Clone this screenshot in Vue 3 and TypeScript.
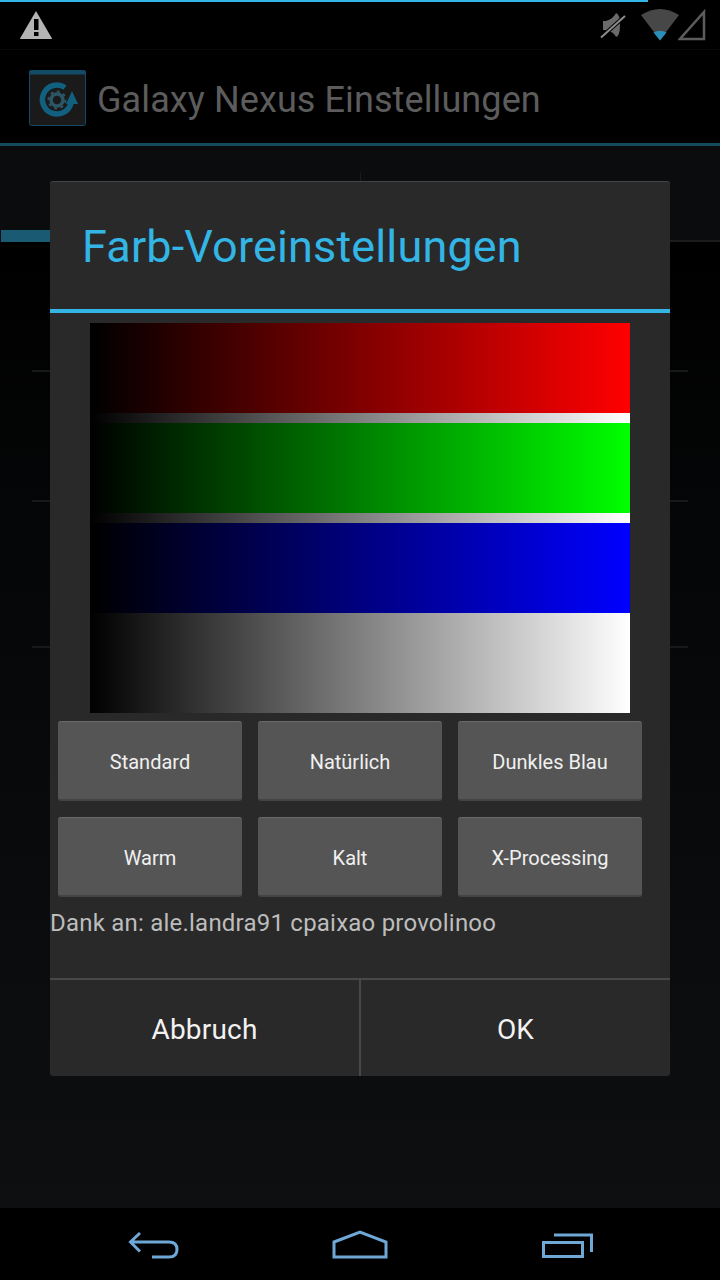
<template>
  <div class="screen">
    <div class="status-bar">
      <div class="progress"></div>
      <svg class="warn" width="34" height="30" viewBox="0 0 34 30">
        <path d="M17 1 L33 28.5 Q33 29 32 29 L2 29 Q1 29 1 28.5 Z" fill="#b4b4b4" />
        <rect x="15" y="9" width="4.5" height="11" fill="#000" />
        <rect x="15" y="22" width="4.5" height="4" fill="#000" />
      </svg>
      <div class="status-icons">
        <svg class="mute" width="26" height="28" viewBox="0 0 26 28">
          <path d="M3 9 L6 9 Q14 6 16 1 Q20 2 20 13 Q20 24 16 25 Q14 20 6 18 L3 18 Z" fill="#6a6a6a" />
          <path d="M1 25.5 L25 4" stroke="#000" stroke-width="4" />
          <path d="M1 25.5 L25 4" stroke="#8c8c8c" stroke-width="2" />
        </svg>
        <svg class="wifi" width="40" height="32" viewBox="0 0 40 32">
          <path d="M1 6 Q20 -6 39 6 L20 31 Z" fill="#474747" />
          <path d="M13.5 23.5 Q20 20 26.5 23.5 L20 31.5 Z" fill="#2a8fb8" />
        </svg>
        <svg class="signal" width="28" height="32" viewBox="0 0 28 32">
          <path d="M26 3 L26 30 L2 30 Z" fill="none" stroke="#5c5c5c" stroke-width="2.5" />
        </svg>
      </div>
    </div>

    <div class="action-bar">
      <svg class="app-icon" width="57" height="56" viewBox="0 0 57 56">
        <rect x="0.5" y="0.5" width="56" height="55" rx="2" fill="#1a1a1a" stroke="#134a66" />
        <rect x="0.5" y="0.5" width="56" height="4" fill="#134a66" />
        <path d="M42 33 A14.5 14.5 0 1 1 36 17.5" fill="none" stroke="#12607f" stroke-width="5.5" />
        <circle cx="28" cy="30" r="6" fill="none" stroke="#2c5666" stroke-width="3.5" />
        <circle cx="28" cy="30" r="8.5" fill="none" stroke="#2c5666" stroke-width="2" stroke-dasharray="3 3.6" />
        <path d="M43 21 L49 34 L37 34 Z" fill="#12607f" />
      </svg>
      <span class="app-title">Galaxy Nexus Einstellungen</span>
    </div>

    <div class="tabs">
      <div class="tab tab-active"></div>
      <div class="tab tab-right"></div>
    </div>

    <div class="list">
      <div class="list-row row-a"></div>
      <div class="list-row row-b"></div>
      <div class="list-row row-c"></div>
    </div>

    <div class="nav-bar">
      <svg width="52" height="30" viewBox="0 0 52 30">
        <path d="M12 3 L2.5 12 L12 21.5 M3 12 L41 12 Q49 12 49 19.5 Q49 27 41 27 L24 27" fill="none" stroke="#6fa8d6" stroke-width="3" />
      </svg>
      <svg width="56" height="30" viewBox="0 0 56 30">
        <path d="M2 12 L28 2 L54 12 L54 27 L2 27 Z" fill="none" stroke="#6fa8d6" stroke-width="3" />
      </svg>
      <svg width="54" height="30" viewBox="0 0 54 30">
        <path d="M3.5 12.5 L42.5 12.5 L42.5 26.5 L3.5 26.5 Z M14 5 L51.5 5 L51.5 22" fill="none" stroke="#6fa8d6" stroke-width="3" />
      </svg>
    </div>

    <div class="dialog">
      <h1 class="dialog-title">Farb-Voreinstellungen</h1>
      <div class="dialog-body">
        <div class="color-box">
          <div class="strip strip-red"></div>
          <div class="strip-thin"></div>
          <div class="strip strip-green"></div>
          <div class="strip-thin"></div>
          <div class="strip strip-blue"></div>
          <div class="strip-gray"></div>
        </div>
        <div class="presets">
          <button v-for="name in presets" :key="name" class="preset">{{ name }}</button>
        </div>
        <p class="credits">Dank an: ale.landra91 cpaixao provolinoo</p>
      </div>
      <div class="dialog-footer">
        <button class="footer-btn">Abbruch</button>
        <button class="footer-btn">OK</button>
      </div>
    </div>
  </div>
</template>

<script setup lang="ts">
const presets: string[] = ['Standard', 'Natürlich', 'Dunkles Blau', 'Warm', 'Kalt', 'X-Processing']
</script>

<style scoped>
.screen {
  position: relative;
  width: 720px;
  height: 1280px;
  display: flex;
  flex-direction: column;
  background: #000;
  overflow: hidden;
  font-family: Roboto, sans-serif;
}

.status-bar {
  position: relative;
  height: 50px;
  flex-shrink: 0;
  display: flex;
  justify-content: space-between;
  align-items: flex-start;
  background: #000;
  border-bottom: 1px solid #0a0a0a;
  box-sizing: border-box;
}

.progress {
  position: absolute;
  left: 0;
  top: 0;
  width: 648px;
  height: 2px;
  background: #33b5e5;
}

.warn {
  margin: 10px 0 0 19px;
}

.status-icons {
  display: flex;
  align-items: flex-start;
  padding: 9px 14px 0 0;
}

.mute {
  margin-top: 3px;
}

.wifi {
  margin-left: 14px;
}

.signal {
  margin-left: -2px;
}

.action-bar {
  height: 96px;
  flex-shrink: 0;
  display: flex;
  align-items: flex-start;
  background: #000;
  border-bottom: 3px solid #144a5e;
  box-sizing: border-box;
}

.app-icon {
  margin: 20px 0 0 29px;
}

.app-title {
  margin: 26px 0 0 11px;
  font-size: 36px;
  line-height: 48px;
  letter-spacing: 0.1px;
  color: #5c5c5c;
}

.tabs {
  height: 96px;
  flex-shrink: 0;
  display: flex;
  background: #0b0c0d;
}

.tab {
  width: 360px;
  box-sizing: border-box;
}

.tab-active {
  position: relative;
}

.tab-active::after {
  content: '';
  position: absolute;
  left: 1px;
  bottom: 0;
  width: 358px;
  height: 12px;
  background: #1a5a72;
}

.tab-right {
  border-left: 1px solid #1a1b1c;
  border-bottom: 2px solid #1c1c1c;
  margin-top: 26px;
  height: 70px;
}

.list {
  flex: 1;
  display: flex;
  flex-direction: column;
  background: linear-gradient(#000 0, #050607 30%, #0e0f11 100%);
  padding: 0 32px;
}

.list-row {
  border-bottom: 2px solid #17181a;
}

.row-a {
  height: 128px;
}

.row-b {
  height: 128px;
}

.row-c {
  height: 144px;
}

.nav-bar {
  height: 72px;
  flex-shrink: 0;
  display: flex;
  justify-content: space-between;
  align-items: flex-start;
  padding: 22px 126px 0 128px;
  box-sizing: border-box;
  background: #000;
}

.dialog {
  position: absolute;
  left: 50px;
  top: 181px;
  width: 620px;
  height: 895px;
  display: flex;
  flex-direction: column;
  background: #292929;
  border-top: 1px solid #444;
  border-radius: 3px;
  box-sizing: border-box;
}

.dialog-title {
  height: 127px;
  margin: 0;
  padding: 0 0 0 32px;
  flex-shrink: 0;
  box-sizing: border-box;
  font-weight: 400;
  font-size: 45px;
  line-height: 130px;
  letter-spacing: 0.15px;
  color: #33b5e5;
}

.dialog-body {
  flex: 1;
  border-top: 4px solid #33b5e5;
  padding-top: 10px;
  display: flex;
  flex-direction: column;
}

.color-box {
  width: 540px;
  margin-left: 40px;
  display: flex;
  flex-direction: column;
}

.strip {
  height: 90px;
}

.strip-red {
  background: linear-gradient(to right, #000, #f00);
}

.strip-green {
  background: linear-gradient(to right, #000, #0f0);
}

.strip-blue {
  background: linear-gradient(to right, #000, #00f);
}

.strip-thin {
  height: 10px;
  background: linear-gradient(to right, #000, #fff);
}

.strip-gray {
  height: 100px;
  background: linear-gradient(to right, #000, #fff);
}

.presets {
  display: grid;
  grid-template-columns: repeat(3, 184px);
  grid-auto-rows: 80px;
  column-gap: 16px;
  row-gap: 16px;
  margin: 8px 0 0 8px;
}

.preset {
  padding: 3px 0 0;
  border: 0;
  border-top: 1px solid #6a6a6a;
  border-bottom: 2px solid #444;
  border-radius: 3px;
  background: #555;
  color: #f0f0f0;
  font-family: Roboto, sans-serif;
  font-size: 20px;
}

.credits {
  margin: 12px 0 0;
  font-size: 24px;
  line-height: 28px;
  letter-spacing: 0.22px;
  color: #bdbdbd;
}

.dialog-footer {
  height: 98px;
  flex-shrink: 0;
  display: flex;
  border-top: 2px solid #484848;
  box-sizing: border-box;
}

.footer-btn {
  flex: 1;
  padding: 2px 0 0;
  border: 0;
  background: transparent;
  color: #f2f2f2;
  font-family: Roboto, sans-serif;
  font-size: 28px;
  letter-spacing: 0.2px;
}

.footer-btn:first-child {
  border-right: 2px solid #484848;
}
</style>
